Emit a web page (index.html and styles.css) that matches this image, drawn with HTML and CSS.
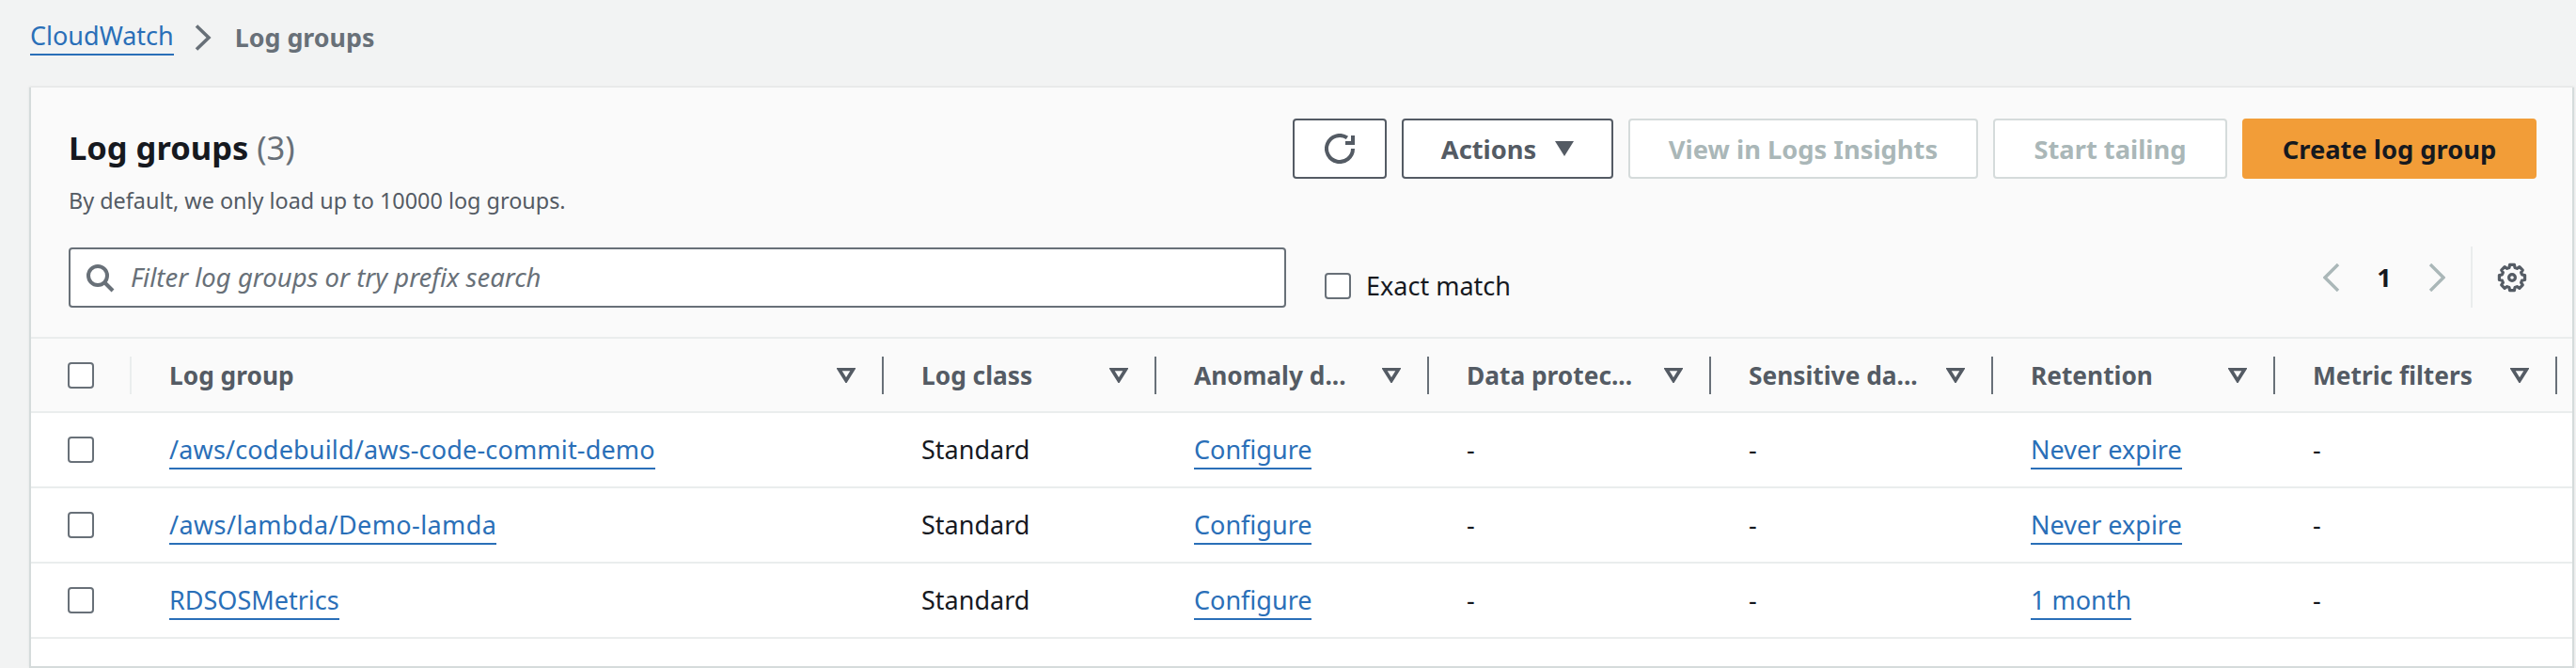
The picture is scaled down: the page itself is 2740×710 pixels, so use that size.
FILE: index.html
```html
<!DOCTYPE html>
<html lang="en">
<head>
<meta charset="utf-8">
<title>Log groups</title>
<link rel="stylesheet" href="styles.css">
</head>
<body>
<nav class="crumbs">
  <a class="link" href="#">CloudWatch</a>
  <svg class="crumb-sep" viewBox="0 0 18 28"><polyline points="2,1.5 15,14 2,26.5"/></svg>
  <span class="crumb-current">Log groups</span>
</nav>
<main class="card">
  <section class="head">
    <div class="head-top">
      <div class="titles">
        <h1 class="title">Log groups <span class="count">(3)</span></h1>
        <p class="desc">By default, we only load up to 10000 log groups.</p>
      </div>
      <div class="actions">
        <button class="btn btn-icon"><svg class="ico" viewBox="0 0 16 16"><path d="M15 8a7 7 0 1 1-3.04-5.77"/><path d="M15 1v4h-4"/></svg></button>
        <button class="btn btn-actions">Actions <svg class="caret" viewBox="0 0 20 16"><polygon points="0,0 20,0 10,16"/></svg></button>
        <button class="btn btn-off btn-insights">View in Logs Insights</button>
        <button class="btn btn-off btn-tail">Start tailing</button>
        <button class="btn btn-primary">Create log group</button>
      </div>
    </div>
    <div class="head-bottom">
      <label class="search">
        <svg class="search-ico" viewBox="0 0 16 16"><circle cx="7" cy="7" r="5"/><path d="m15 15-4.5-4.5"/></svg>
        <span class="placeholder">Filter log groups or try prefix search</span>
      </label>
      <label class="exact"><span class="check"></span><span>Exact match</span></label>
      <div class="pager">
        <svg class="chev" viewBox="0 0 18 30"><polyline points="16,1 2,15 16,29"/></svg>
        <span class="page">1</span>
        <svg class="chev" viewBox="0 0 18 30"><polyline points="2,1 16,15 2,29"/></svg>
        <span class="pager-div"></span>
        <svg class="gear" viewBox="0 0 16 16"><polygon points="6.8,1.2 9.2,1.2 9.52,2.71 10.67,3.19 11.96,2.35 13.65,4.04 12.81,5.33 13.29,6.48 14.8,6.8 14.8,9.2 13.29,9.52 12.81,10.67 13.65,11.96 11.96,13.65 10.67,12.81 9.52,13.29 9.2,14.8 6.8,14.8 6.48,13.29 5.33,12.81 4.04,13.65 2.35,11.96 3.19,10.67 2.71,9.52 1.2,9.2 1.2,6.8 2.71,6.48 3.19,5.33 2.35,4.04 4.04,2.35 5.33,3.19 6.48,2.71"/><circle cx="8" cy="8" r="1.7"/></svg>
      </div>
    </div>
  </section>
  <section class="table">
    <div class="row row-head">
      <div class="sel"><span class="check"></span></div>
      <div class="th"><span class="th-label">Log group</span><svg class="filter" viewBox="0 0 20 16"><polygon points="2.5,1.5 17.5,1.5 10,13.5"/></svg></div>
      <div class="th"><span class="th-label">Log class</span><svg class="filter" viewBox="0 0 20 16"><polygon points="2.5,1.5 17.5,1.5 10,13.5"/></svg></div>
      <div class="th"><span class="th-label">Anomaly d...</span><svg class="filter" viewBox="0 0 20 16"><polygon points="2.5,1.5 17.5,1.5 10,13.5"/></svg></div>
      <div class="th"><span class="th-label">Data protec...</span><svg class="filter" viewBox="0 0 20 16"><polygon points="2.5,1.5 17.5,1.5 10,13.5"/></svg></div>
      <div class="th"><span class="th-label">Sensitive da...</span><svg class="filter" viewBox="0 0 20 16"><polygon points="2.5,1.5 17.5,1.5 10,13.5"/></svg></div>
      <div class="th"><span class="th-label">Retention</span><svg class="filter" viewBox="0 0 20 16"><polygon points="2.5,1.5 17.5,1.5 10,13.5"/></svg></div>
      <div class="th"><span class="th-label">Metric filters</span><svg class="filter" viewBox="0 0 20 16"><polygon points="2.5,1.5 17.5,1.5 10,13.5"/></svg></div>
    </div>
    <div class="row">
      <div class="sel"><span class="check"></span></div>
      <div class="td"><a class="link path" href="#">/aws/codebuild/aws-code-commit-demo</a></div>
      <div class="td">Standard</div>
      <div class="td"><a class="link" href="#">Configure</a></div>
      <div class="td">-</div>
      <div class="td">-</div>
      <div class="td"><a class="link" href="#">Never expire</a></div>
      <div class="td">-</div>
    </div>
    <div class="row">
      <div class="sel"><span class="check"></span></div>
      <div class="td"><a class="link path-short" href="#">/aws/lambda/Demo-lamda</a></div>
      <div class="td">Standard</div>
      <div class="td"><a class="link" href="#">Configure</a></div>
      <div class="td">-</div>
      <div class="td">-</div>
      <div class="td"><a class="link" href="#">Never expire</a></div>
      <div class="td">-</div>
    </div>
    <div class="row">
      <div class="sel"><span class="check"></span></div>
      <div class="td"><a class="link" href="#">RDSOSMetrics</a></div>
      <div class="td">Standard</div>
      <div class="td"><a class="link" href="#">Configure</a></div>
      <div class="td">-</div>
      <div class="td">-</div>
      <div class="td"><a class="link" href="#">1 month</a></div>
      <div class="td">-</div>
    </div>
  </section>
</main>
</body>
</html>
```
FILE: styles.css
```css
* { box-sizing: border-box; }
html, body { margin: 0; height: 710px; overflow: hidden; }
body { background: #f2f3f3; font-family: "Noto Sans", "Open Sans", sans-serif; font-size: 27px; color: #16191f; line-height: 36px; }

.link { color: #2a6fb8; text-decoration: none; border-bottom: 2px solid #2a6fb8; padding-bottom: 1px; }
.path { letter-spacing: .17px; }
.path-short { letter-spacing: .4px; }

.crumbs { display: flex; align-items: center; height: 93px; padding: 0 0 14px 32px; }
.crumb-sep { width: 18px; height: 28px; margin: 0 25px 0 22px; }
.crumb-sep polyline { fill: none; stroke: #687078; stroke-width: 3.6; }
.crumb-current { color: #687078; font-weight: 700; font-size: 26.8px; }

.card { margin: 0 2px 0 31px; height: 617px; background: #fff; border: solid #d5dbdb; border-width: 0 2px 2px 2px; box-shadow: 0 -1px 2px rgba(0,0,0,.08); }

.head { height: 267px; background: #fafafa; border-bottom: 2px solid #eaeded; padding: 33px 38px 0 40px; }
.head-top { display: flex; justify-content: space-between; height: 137px; }
.title { margin: 9px 0 0; font-size: 34.5px; line-height: 44px; font-weight: 700; }
.count { color: #687078; font-weight: 400; }
.desc { margin: 18px 0 0; font-size: 23.4px; line-height: 32px; color: #545b64; }

.actions { display: flex; gap: 16px; }
.btn { height: 64px; display: flex; align-items: center; justify-content: center; gap: 20px; border-radius: 4px; border: 2px solid #545b64; background: #fff; color: #545b64; font: 700 27.3px "Noto Sans", sans-serif; padding: 0; }
.btn-icon { width: 100px; }
.btn-actions { width: 225px; }
.btn-off { border-color: #d5dbdb; color: #aab7b8; }
.btn-insights { width: 372px; }
.btn-tail { width: 249px; }
.btn-primary { width: 313px; background: #f29d38; border-color: #f29d38; color: #16191f; }
.ico { width: 32px; height: 32px; fill: none; stroke: #545b64; stroke-width: 2; }
.caret { width: 20px; height: 16px; fill: #545b64; }

.head-bottom { display: flex; align-items: flex-start; }
.search { width: 1295px; height: 64px; display: flex; align-items: center; gap: 17px; padding-left: 15px; background: #fff; border: 2px solid #687078; border-radius: 4px; }
.search-ico { width: 32px; height: 32px; fill: none; stroke: #687078; stroke-width: 2; }
.placeholder { font-style: italic; color: #687078; font-size: 27.5px; }
.exact { display: flex; align-items: center; gap: 16px; margin: 23px 0 0 41px; }
.check { display: block; width: 28px; height: 28px; background: #fff; border: 2px solid #687078; border-radius: 4px; }

.pager { margin: -1px 10px 0 auto; display: flex; align-items: center; height: 65px; }
.chev { width: 18px; height: 30px; fill: none; stroke: #aab7b8; stroke-width: 3.4; }
.page { width: 94px; text-align: center; font-weight: 700; }
.pager-div { width: 2px; height: 65px; background: #eaeded; margin: 0 26px 0 27px; }
.gear { width: 32px; height: 32px; fill: none; stroke: #545b64; stroke-width: 1.6; stroke-linejoin: round; }

.row { display: grid; grid-template-columns: 107px 800px 290px 290px 300px 300px 300px 300px; height: 80px; align-items: center; border-bottom: 2px solid #eaeded; }
.row-head { height: 79px; background: #fafafa; }
.sel { padding-left: 39px; height: 40px; display: flex; align-items: center; border-right: 2px solid #eaeded; }
.row:not(.row-head) .sel { border-right: 0; }
.th { height: 40px; padding: 0 28px 0 40px; display: flex; align-items: center; justify-content: space-between; border-right: 2px solid #687078; font-weight: 700; font-size: 26.3px; color: #545b64; }
.td { padding-left: 40px; white-space: nowrap; }
.filter { width: 20px; height: 16px; fill: none; stroke: #545b64; stroke-width: 3.6; flex: none; }
```
